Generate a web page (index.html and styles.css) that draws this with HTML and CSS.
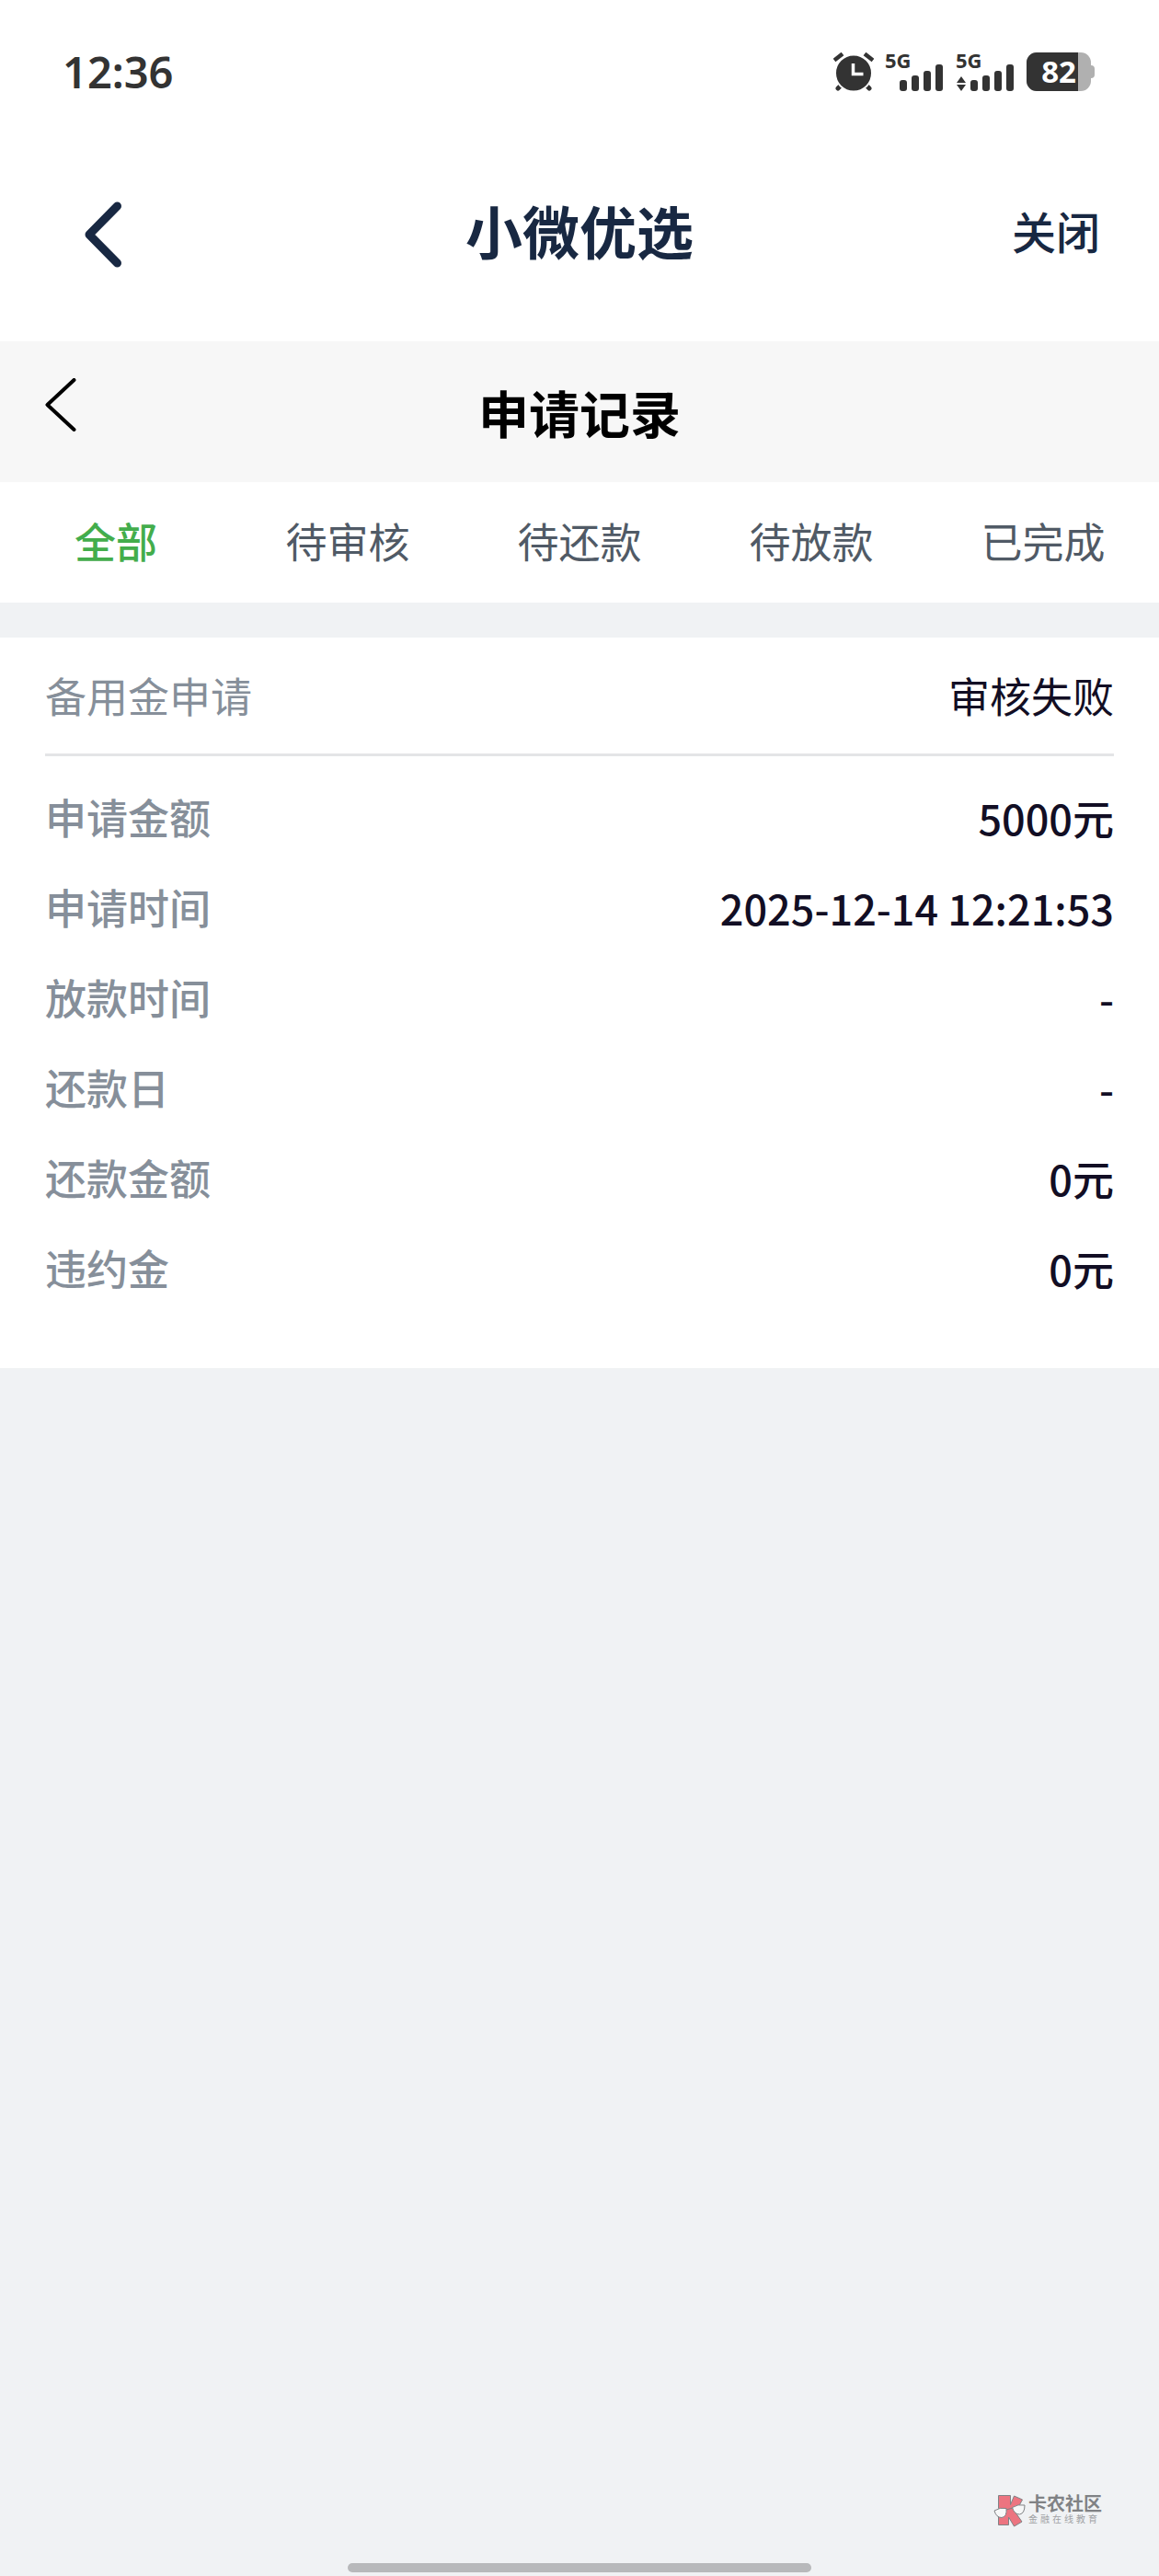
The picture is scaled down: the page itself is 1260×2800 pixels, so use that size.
FILE: index.html
```html
<!DOCTYPE html>
<html lang="zh-CN">
<head>
    <meta charset="UTF-8">
    <meta name="viewport" content="width=device-width, initial-scale=1.0">
    <title>申请记录</title>
    <link rel="stylesheet" href="styles.css">
</head>
<body>
    <div class="status-bar">
        <span class="time">12:36</span>
        <div class="status-icons">
            <svg class="alarm" width="44" height="42" viewBox="0 0 44 42">
                <path d="M10 34l-5 5M34 34l5 5" stroke="#333" stroke-width="5" stroke-linecap="round"/>
                <path d="M1 8.500l9-7M43 8.500l-9-7" stroke="#333" stroke-width="4.500"/>
                <circle cx="22" cy="22.500" r="20" fill="#333" stroke="#fff" stroke-width="2"/>
                <path d="M21.500 12v11.500h11" fill="none" stroke="#fff" stroke-width="3.500"/>
            </svg>
            <div class="signal">
                <span class="network">5G</span>
                <svg width="64" height="29" viewBox="0 0 64 29" fill="#333">
                    <rect x="16" y="17" width="8" height="12" rx="3"/>
                    <rect x="29" y="12" width="8" height="17" rx="3"/>
                    <rect x="42" y="7" width="8" height="22" rx="3"/>
                    <rect x="55" y="0" width="8" height="29" rx="3"/>
                </svg>
            </div>
            <div class="signal">
                <span class="network">5G</span>
                <svg width="64" height="29" viewBox="0 0 64 29" fill="#333">
                    <path d="M6 13l5 7H1zM6 29l5-7H1z"/>
                    <rect x="16" y="17" width="8" height="12" rx="3"/>
                    <rect x="29" y="12" width="8" height="17" rx="3"/>
                    <rect x="42" y="7" width="8" height="22" rx="3"/>
                    <rect x="55" y="0" width="8" height="29" rx="3"/>
                </svg>
            </div>
            <div class="battery">
                <div class="battery-body">
                    <div class="battery-level">82</div>
                </div>
                <div class="battery-tip"></div>
            </div>
        </div>
    </div>

    <header class="app-header">
        <button class="app-back" aria-label="返回">
            <svg width="40" height="72" viewBox="0 0 40 72" fill="none" stroke="#182842" stroke-width="9" stroke-linecap="round" stroke-linejoin="round">
                <path d="M35.500 5L5 36l30.500 31"/>
            </svg>
        </button>
        <h1>小微优选</h1>
        <button class="app-close">关闭</button>
    </header>

    <div class="page-header">
        <button class="page-back" aria-label="返回">
            <svg width="34" height="58" viewBox="0 0 34 58" fill="none" stroke="#000" stroke-width="4" stroke-linecap="round" stroke-linejoin="round">
                <path d="M31.500 2L2.500 29l29 27"/>
            </svg>
        </button>
        <h2>申请记录</h2>
    </div>

    <nav class="tabs">
        <button class="tab active">全部</button>
        <button class="tab">待审核</button>
        <button class="tab">待还款</button>
        <button class="tab">待放款</button>
        <button class="tab">已完成</button>
    </nav>

    <main class="record">
        <div class="record-head">
            <span class="record-type">备用金申请</span>
            <span class="record-status">审核失败</span>
        </div>
        <dl class="record-list">
            <div class="record-row"><dt>申请金额</dt><dd>5000元</dd></div>
            <div class="record-row"><dt>申请时间</dt><dd>2025-12-14 12:21:53</dd></div>
            <div class="record-row"><dt>放款时间</dt><dd>-</dd></div>
            <div class="record-row"><dt>还款日</dt><dd>-</dd></div>
            <div class="record-row"><dt>还款金额</dt><dd>0元</dd></div>
            <div class="record-row"><dt>违约金</dt><dd>0元</dd></div>
        </dl>
    </main>

    <footer class="footer">
        <div class="brand">
            <svg width="36" height="36" viewBox="0 0 36 36" stroke="#808285" stroke-linejoin="round">
                <path d="M5.500 1.500h13v10l4-9.500 9 4-7.500 14 7 10-8.500 5-6-10v8.500h-11z" fill="#ec7480"/>
                <path d="M14 17l7-2" fill="none"/>
                <path d="M1 18q6-4 13-2.500 1 9-5 10-6 0-8-7.500z" fill="#f7f8f8"/>
                <path d="M20.500 14.500q6-4 13.500-2.500 0 9-5.500 10-6 0-8-7.500z" fill="#f7f8f8"/>
            </svg>
            <div class="brand-text">
                <span class="brand-name">卡农社区</span>
                <span class="brand-slogan">金融在线教育</span>
            </div>
        </div>
        <div class="home-indicator"></div>
    </footer>
</body>
</html>
```
FILE: styles.css
```css
:root {
    --navy: #182842;
    --ink: #120e24;
    --gray: #868f9a;
    --tab: #505a66;
    --green: #43ad4c;
    --page: #f0f2f4;
    --status: #333;
}

* {
    box-sizing: border-box;
}

body {
    display: flex;
    flex-direction: column;
    min-height: 100vh;
    margin: 0;
    background: var(--page);
    color: var(--ink);
    font-family: "Noto Sans CJK SC", sans-serif;
}

h1, h2, dl, dd {
    margin: 0;
}

button {
    padding: 0;
    border: none;
    background: none;
    color: inherit;
    font: inherit;
    cursor: pointer;
}

svg {
    display: block;
}

/* Status bar */
.status-bar {
    display: flex;
    justify-content: space-between;
    align-items: center;
    height: 134px;
    padding: 22px 70px 0 68px;
    background: #fff;
    color: var(--status);
    font-family: "Noto Sans", sans-serif;
}

.time {
    font-size: 47px;
    font-weight: 600;
    line-height: 48px;
}

.status-icons {
    display: flex;
    gap: 12px;
}

.signal {
    display: flex;
    flex-direction: column;
    justify-content: space-between;
    width: 65px;
    height: 42px;
}

.network {
    height: 13px;
    font-size: 22px;
    font-weight: 700;
    line-height: 16px;
}

.battery {
    display: flex;
    align-items: center;
}

.battery-body {
    width: 70px;
    height: 42px;
    border-radius: 11px;
    background: #b0b0b0;
}

.battery-level {
    width: 80%;
    padding-right: 2px;
    border-radius: 11px 0 0 11px;
    background: var(--status);
    color: #fff;
    font-size: 33px;
    font-weight: 700;
    line-height: 42px;
    text-align: right;
}

.battery-tip {
    width: 4px;
    height: 14px;
    border-radius: 0 4px 4px 0;
    background: #b0b0b0;
}

/* App header */
.app-header {
    display: grid;
    grid-template-columns: 1fr auto 1fr;
    align-items: center;
    height: 237px;
    padding: 0 64px 6px;
    background: #fff;
    color: var(--navy);
}

.app-header h1 {
    font-size: 62px;
    font-weight: 700;
    line-height: 64px;
}

.app-back {
    justify-self: start;
    padding: 10px 28px 0;
}

.app-close {
    justify-self: end;
    font-size: 48px;
    font-weight: 500;
    line-height: 64px;
}

/* Page header */
.page-header {
    display: grid;
    grid-template-columns: 1fr auto 1fr;
    align-items: start;
    height: 153px;
    padding: 40px 49px 0;
    background: #f7f7f7;
    color: #000;
}

.page-header h2 {
    font-size: 55px;
    font-weight: 700;
    line-height: 72px;
}

.page-back {
    justify-self: start;
}

/* Tabs */
.tabs {
    display: flex;
    margin-bottom: 38px;
    background: #fff;
}

.tab {
    flex: 1;
    padding-bottom: 3px;
    color: var(--tab);
    font-size: 45px;
    line-height: 128px;
}

.tab.active {
    color: var(--green);
    font-weight: 500;
}

/* Record */
.record {
    padding: 0 49px 59px;
    background: #fff;
    font-size: 45px;
}

.record-head {
    display: flex;
    justify-content: space-between;
    margin-bottom: 18px;
    border-bottom: 3px solid #e4e5e6;
    line-height: 126px;
}

.record-type,
.record-row dt {
    color: var(--gray);
}

.record-row {
    display: flex;
    justify-content: space-between;
    font-weight: 500;
    line-height: 98px;
}

.record-row dt {
    line-height: 95px;
}

/* Footer */
.footer {
    display: flex;
    flex-direction: column;
    gap: 39px;
    margin-top: auto;
    padding-bottom: 4px;
}

.brand {
    display: flex;
    align-self: flex-end;
    gap: 2px;
    margin-right: 62px;
    color: #808285;
}

.brand-text {
    display: flex;
    flex-direction: column;
}

.brand-name {
    font-size: 20px;
    font-weight: 700;
    line-height: 20px;
}

.brand-slogan {
    color: #a0a2a5;
    font-size: 10px;
    letter-spacing: 3px;
    line-height: 14px;
}

.home-indicator {
    align-self: center;
    width: 40%;
    height: 10px;
    border-radius: 5px;
    background: #b8b9bb;
}
```
